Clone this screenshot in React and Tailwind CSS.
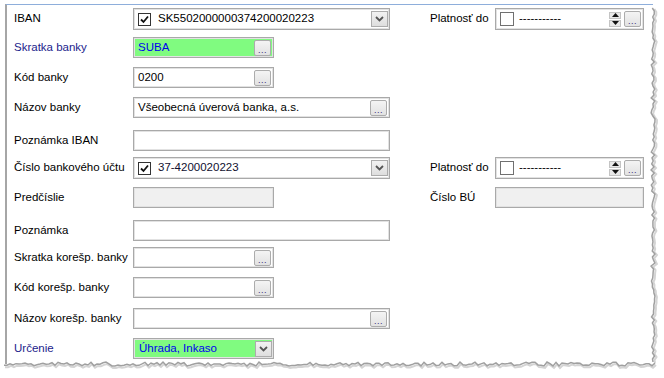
import React from 'react';

// pseudo random jagged edge for the torn paper look
function jag(i) {
  const v = Math.sin(i * 12.9898) * 43758.5453;
  return v - Math.floor(v);
}

function TornEdges() {
  const right = [];
  for (let y = 8; y <= 364; y += 3) right.push(`${651 + jag(y) * 4},${y}`);
  const bottom = [];
  for (let x = 4; x <= 655; x += 3) bottom.push(`${x},${362 + jag(x + 7) * 4}`);
  const shift = (pts, dx, dy) => pts.map(p => { const [a, b] = p.split(','); return `${+a + dx},${+b + dy}`; }).join(' ');
  return (
    <svg className="absolute left-0 top-0" width="664" height="378">
      <polyline points={shift(right, 2, 1)} fill="none" stroke="#d4d4d4" strokeWidth="2" />
      <polyline points={right.join(' ')} fill="none" stroke="#a0a0a0" strokeWidth="1.5" />
      <polyline points={shift(bottom, 1, 2)} fill="none" stroke="#d4d4d4" strokeWidth="2" />
      <polyline points={bottom.join(' ')} fill="none" stroke="#a0a0a0" strokeWidth="1.5" />
    </svg>
  );
}

function DotsBtn() {
  return (
    <div className="w-[17px] h-[16px] mr-[2px] border border-[#acacac] rounded-[2px] bg-gradient-to-b from-[#f4f4f4] to-[#e2e2e2] flex items-end justify-center pb-[2px]">
      <span className="text-[9px] leading-[6px] tracking-[0.5px] text-[#3a2a7a]">...</span>
    </div>
  );
}

function DropBtn() {
  return (
    <div className="w-[17px] h-[16px] mr-[1px] border border-[#acacac] bg-gradient-to-b from-[#f2f2f2] to-[#dedede] flex items-center justify-center">
      <svg width="9" height="6" viewBox="0 0 9 6">
        <path d="M1 1 L4.5 4.5 L8 1" fill="none" stroke="#555" strokeWidth="1.8" />
      </svg>
    </div>
  );
}

function Check({ on }) {
  return (
    <div className={`w-[13px] h-[13px] border ${on ? 'border-[#333]' : 'border-[#707070]'} bg-white flex items-center justify-center`}>
      {on && (
        <svg width="9" height="9" viewBox="0 0 9 9">
          <path d="M1 4.5 L3.5 7 L8 1.5" fill="none" stroke="#111" strokeWidth="1.8" />
        </svg>
      )}
    </div>
  );
}

function Box({ w, bg = 'bg-white', h = 'h-[21px]', children }) {
  return (
    <div className={`${w} ${h} ${bg} border border-[#a9a9a9] shadow-[inset_0_0_0_1px_#e2e2e2] flex items-center`}>
      {children}
    </div>
  );
}

function DateBox() {
  return (
    <Box w="w-[149px]" h="h-[22px]">
      <div className="ml-[4px] w-[14px] h-[14px] border border-[#707070] bg-white" />
      <span className="ml-[5px] text-black">-----------</span>
      <div className="ml-auto flex flex-col gap-[1px] mr-[3px]">
        <div className="w-[12px] h-[7px] bg-[#e8e8e8] border border-[#c4c4c4] flex items-center justify-center">
          <svg width="7" height="4" viewBox="0 0 7 4"><path d="M0 4 L3.5 0 L7 4 Z" fill="#111" /></svg>
        </div>
        <div className="w-[12px] h-[7px] bg-[#e8e8e8] border border-[#c4c4c4] flex items-center justify-center">
          <svg width="7" height="4" viewBox="0 0 7 4"><path d="M0 0 L3.5 4 L7 0 Z" fill="#111" /></svg>
        </div>
      </div>
      <DotsBtn />
    </Box>
  );
}

function Row({ label, mt, blue, children, right }) {
  return (
    <div className={`flex items-center ${mt}`}>
      <div className={`w-[126px] pl-[7px] ${blue ? 'text-[#1c1c8c]' : 'text-black'}`}>{label}</div>
      <div className="w-[297px]">{children}</div>
      {right}
    </div>
  );
}

function Right({ label, children }) {
  return (
    <div className="flex items-center">
      <div className="w-[65px]">{label}</div>
      {children}
    </div>
  );
}

export default function App() {
  return (
    <div className="w-[664px] h-[378px] bg-white relative overflow-hidden font-['Liberation_Sans',Arial,sans-serif] text-[11.5px]">
      <div className="ml-[5px] mt-[4px] w-[648px] h-[360px] border-l-2 border-l-[#a6a6a6] border-t border-t-[#8eaedb] pt-[3px]">
        <Row label="IBAN" mt="mt-0" right={<Right label="Platnosť do"><DateBox /></Right>}>
          <Box w="w-[257px]" h="h-[22px]">
            <div className="ml-[4px]"><Check on /></div>
            <span className="ml-[7px] text-black">SK5502000000374200020223</span>
            <div className="ml-auto"><DropBtn /></div>
          </Box>
        </Row>
        <Row label="Skratka banky" mt="mt-[7px]" blue>
          <Box w="w-[141px]" bg="bg-[#80fb80]">
            <span className="ml-[4px] text-[#0000ee]">SUBA</span>
            <div className="ml-auto"><DotsBtn /></div>
          </Box>
        </Row>
        <Row label="Kód banky" mt="mt-[9px]">
          <Box w="w-[141px]">
            <span className="ml-[4px] text-black">0200</span>
            <div className="ml-auto"><DotsBtn /></div>
          </Box>
        </Row>
        <Row label="Názov banky" mt="mt-[9px]">
          <Box w="w-[257px]">
            <span className="ml-[4px] text-black">Všeobecná úverová banka, a.s.</span>
            <div className="ml-auto"><DotsBtn /></div>
          </Box>
        </Row>
        <Row label="Poznámka IBAN" mt="mt-[12px]">
          <Box w="w-[257px]" />
        </Row>
        <Row label="Číslo bankového účtu" mt="mt-[6px]" right={<Right label="Platnosť do"><DateBox /></Right>}>
          <Box w="w-[257px]" h="h-[22px]">
            <div className="ml-[4px]"><Check on /></div>
            <span className="ml-[7px] text-[#101030]">37-4200020223</span>
            <div className="ml-auto"><DropBtn /></div>
          </Box>
        </Row>
        <Row label="Predčíslie" mt="mt-[8px]" right={<Right label="Číslo BÚ"><Box w="w-[149px]" bg="bg-[#f0f0f0]" /></Right>}>
          <Box w="w-[141px]" bg="bg-[#f0f0f0]" />
        </Row>
        <Row label="Poznámka" mt="mt-[12px]">
          <Box w="w-[257px]" />
        </Row>
        <Row label="Skratka korešp. banky" mt="mt-[6px]">
          <Box w="w-[141px]">
            <div className="ml-auto"><DotsBtn /></div>
          </Box>
        </Row>
        <Row label="Kód korešp. banky" mt="mt-[9px]">
          <Box w="w-[141px]">
            <div className="ml-auto"><DotsBtn /></div>
          </Box>
        </Row>
        <Row label="Názov korešp. banky" mt="mt-[10px]">
          <Box w="w-[257px]">
            <div className="ml-auto"><DotsBtn /></div>
          </Box>
        </Row>
        <Row label="Určenie" mt="mt-[9px]" blue>
          <Box w="w-[141px]" bg="bg-[#80fb80]">
            <span className="ml-[5px] text-[#0000ee]">Úhrada, Inkaso</span>
            <div className="ml-auto"><DropBtn /></div>
          </Box>
        </Row>
      </div>
      <TornEdges />
    </div>
  );
}
